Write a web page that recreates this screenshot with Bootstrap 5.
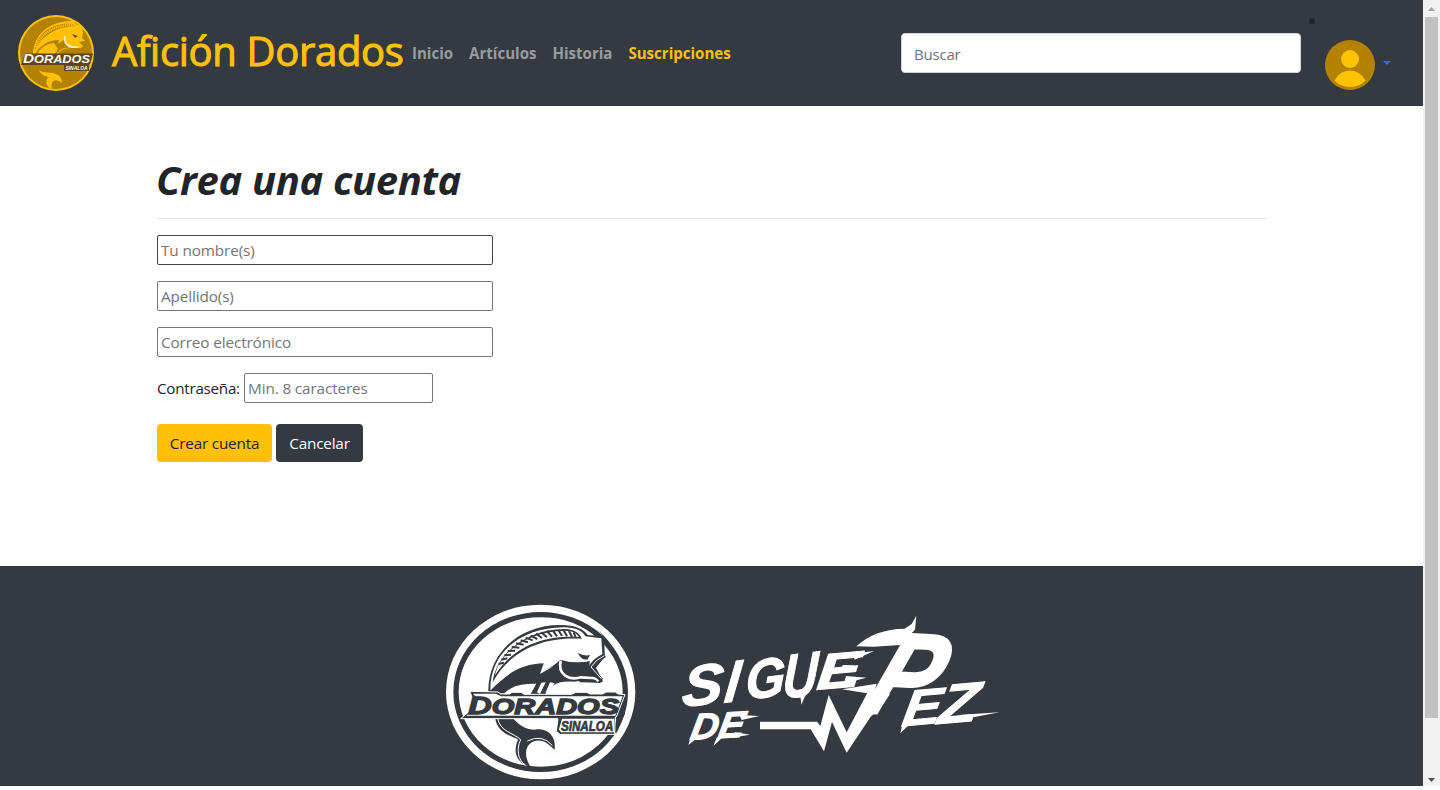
<!DOCTYPE html>
<html lang="es">
<head>
<meta charset="utf-8">
<meta name="viewport" content="width=device-width, initial-scale=1">
<title>Afición Dorados - Crea una cuenta</title>
<link href="https://cdn.jsdelivr.net/npm/bootstrap@5.3.0/dist/css/bootstrap.min.css" rel="stylesheet">
<style>
html, body { height: 786px; overflow: hidden; }
body { font-family: "Open Sans", "Noto Sans", sans-serif; font-size: 16px; color: #212529; }
svg text { font-family: "Liberation Sans", sans-serif; }
.page-body { min-width: 0; }
.site-nav { height: 106px; background: #343a40; padding: 0 32px 0 16px; }
.site-logo { width: 80px; height: 80px; margin-right: 16px; }
.site-title { font-size: 40px; font-weight: 500; line-height: 48px; color: #ffc107; width: 292px; white-space: nowrap; letter-spacing: -.32px; -webkit-text-stroke: 1px #ffc107; margin: 0 8px 4px 0; }
.site-menu { gap: 16px; font-weight: 700; font-size: 15.05px; }
.site-menu a { color: #999c9f; text-decoration: none; white-space: nowrap; }
.site-menu a.current { color: #ffc107; }
.search-box { width: 400px; height: 40px; font-size: 15px; letter-spacing: -.2px; padding: 8px 12px 6px; border: 1px solid #ced4da; border-radius: 4px; }
.search-box::placeholder { color: #6c757d; opacity: 1; }
.user-item { width: 90px; height: 106px; }
.account-area { padding: 50px 0 0 157px; height: 460px; }
.account-area h1 { font-size: 40px; font-weight: 700; font-style: italic; line-height: 48px; letter-spacing: -.36px; margin: 0 0 14px -1px; white-space: nowrap; }
.rule { width: 1110px; height: 1px; background: #e5e5e5; margin-bottom: 16px; }
.plain-field { display: block; box-sizing: border-box; width: 336px; height: 30px; padding: 1px 2px 1px 3px; border: 1px solid #767676; border-radius: 2px; font-size: 15.3px; letter-spacing: -.12px; }
.plain-field.hovered { border-color: #444; }
.plain-field.short { width: 189px; }
.plain-field::placeholder { color: #757575; opacity: 1; }
.field-stack { gap: 16px; }
.pass-label { width: 87px; font-size: 15.2px; letter-spacing: -.25px; }
.button-row { padding-top: 5px; }
.btn-account { height: 38px; border: 0; border-radius: 4px; padding: 0; font-size: 15.3px; letter-spacing: -.2px; white-space: nowrap; }
.btn-create { width: 115px; color: #212529; }
.btn-cancel { width: 87px; background: #343a40; }
.site-foot { height: 220px; background: #343a40; }
.scroll-track { width: 17px; height: 786px; background: #f1f1f1; }
.scroll-thumb { width: 13px; height: 701px; background: #c1c1c1; }
</style>
</head>
<body class="m-0 bg-white">
<div class="d-flex">
<div class="page-body flex-grow-1">
<nav class="site-nav d-flex align-items-center">
  <svg class="site-logo flex-shrink-0" viewBox="0 0 80 80" aria-label="Dorados Sinaloa">
    <circle cx="40" cy="40" r="38" fill="#ffc107"/><circle cx="40" cy="40" r="36" fill="#b58100"/>
    <path d="M17 42C17 21 35 7 57 8L61 12 66 13 67 20 66 25 69 28 63 29 67 33 65 35C53 35 46 34 41 42Z" fill="#ffc107"/>
    <path d="M19 37C21 20 37 9 57 11L59 13C42 14 28 20 19 37Z" fill="#b58100"/>
    <path d="M20 34C25 20 40 11 58 12" stroke="#ffc107" stroke-width="2.500" stroke-dasharray="1.200 .7" fill="none"/>
    <path d="M19 41C25 31 34 27 43 27L42 31 49 26C49 32 52 34 54 35C47 34 43 37 40 42H35L38 36L33 41Z" fill="#b58100"/>
    <path d="M20 43C25 33 31 31 38 30L42 36L38 42Z" fill="#ffc107"/>
    <path d="M49 23C47 32 54 35 62 34" stroke="#fff2c0" stroke-width="1.600" fill="none"/>
    <path d="M56 21l6 2-3 2z" fill="#775018"/>
    <path d="M23 57C28 61 35 58 42 62C45 64 46 67 46 70C40 65 34 67 36 76C29 74 29 66 33 64C27 63 24 60 23 57Z" fill="#ffc107"/>
    <path d="M9 40.500H77L74 51H73V58H48V52H5Z" fill="#614419"/>
    <text x="7" y="50" font-size="12" font-weight="900" font-style="italic" fill="#fff" textLength="67" lengthAdjust="spacingAndGlyphs">D<tspan font-size="10">ORADOS</tspan></text>
    <text x="49.500" y="57" font-size="5.500" font-weight="900" font-style="italic" fill="#fff" textLength="22" lengthAdjust="spacingAndGlyphs">SINALOA</text>
  </svg>
  <div class="site-title">Afición Dorados</div>
  <div class="site-menu d-flex"><a href="#">Inicio</a><a href="#">Artículos</a><a href="#">Historia</a><a href="#" class="current">Suscripciones</a></div>
  <input class="search-box ms-auto" type="text" placeholder="Buscar">
  <svg class="user-item flex-shrink-0" viewBox="0 0 90 106" role="img" aria-label="Usuario">
    <circle cx="11" cy="21" r="3" fill="#212529"/>
    <circle cx="49" cy="65" r="25" fill="#b58100"/><circle cx="49" cy="59" r="9" fill="#ffc400"/>
    <path d="M33.500 80.500Q39 70.500 49 70.500T64.500 80.500Q59 87 49 87T33.500 80.500Z" fill="#ffc400"/>
    <path d="M82 61h8l-4 4z" fill="#007bff"/>
  </svg>
</nav>
<main class="account-area">
  <h1>Crea una cuenta</h1>
  <div class="rule"></div>
  <form class="d-flex flex-column field-stack">
    <input class="plain-field hovered" placeholder="Tu nombre(s)">
    <input class="plain-field" placeholder="Apellido(s)">
    <input class="plain-field" placeholder="Correo electrónico">
    <div class="d-flex align-items-center"><label class="pass-label">Contraseña:</label><input class="plain-field short" placeholder="Min. 8 caracteres"></div>
    <div class="button-row d-flex gap-1"><button type="button" class="btn btn-warning btn-account btn-create">Crear cuenta</button><button type="button" class="btn btn-dark btn-account btn-cancel">Cancelar</button></div>
  </form>
</main>
<footer class="site-foot">
<svg width="1423" height="220" viewBox="0 566 1423 220" class="d-block">
  <g transform="translate(440 595) scale(.33333)">
    <ellipse cx="302" cy="291" rx="284" ry="262" fill="#fff"/>
    <ellipse cx="302" cy="291" rx="254" ry="232" fill="none" stroke="#343a40" stroke-width="16"/>
    <!-- body outline, head and fin -->
    <path d="M145 292C142 170 245 85 370 90C410 92 432 103 443 120L490 124Q468 96 430 76Q510 120 540 200L493 140L494 178L496 184L468 218L489 259L480 264Q450 262 420 262L360 205L150 295Z" fill="#343a40"/>
    <path d="M151 284C151 170 245 98 372 97C408 98 427 107 436 124L484 130L487 178L466 192L448 214L446 222L360 200L290 240L310 207C249 208 196 239 153 285Z" fill="#fff"/>
    <path d="M158 262C168 170 270 101 374 102C405 103 418 115 426 131C332 125 220 150 158 262Z" fill="#343a40"/>
    <path d="M165 241C182 165 273 108 374 107C399 107 411 116 417 126C335 121 230 139 165 241Z" fill="#fff"/>
    <g stroke="#343a40" stroke-width="6"><path d="M176 207l16-4M184 194l18-4M193 181l20-2M203 168l22-1M215 156l23 2M228 145l23 4M242 136l22 6M257 128l21 8M272 122l20 10M288 116l18 13M304 112l17 15M321 108l15 17M338 106l13 18M355 105l11 18M371 106l10 18M387 108l9 18M401 113l6 14"/></g>
    <!-- lower body and open jaw -->
    <path d="M154 294C195 233 247 207 311 205L300 237L335 217L361 194Q400 207 450 199L446 222Q464 239 485 258Q442 253 402 260C355 256 335 267 315 300Z" fill="#343a40"/>
    <path d="M362 197C352 238 387 258 423 247L458 249Q470 250 476 259" fill="none" stroke="#fff" stroke-width="8"/>
    <path d="M495 181Q467 193 455 211L449 221L485 256" fill="none" stroke="#343a40" stroke-width="12"/>
    <path d="M493 182Q467 194 453 216L484 251" fill="none" stroke="#fff" stroke-width="3"/>
    <path d="M414 174Q431 184 450 180L443 193C430 196 420 189 414 174Z" fill="#343a40"/>
    <path d="M190 298C219 267 254 266 289 266L272 297ZM291 292L304 263L317 262L300 297ZM316 294L330 262L344 265L323 295Z" fill="#fff"/>
    <path d="M165 365C170 418 221 423 234 434C220 465 223 501 272 516C247 477 259 447 282 439C308 429 326 448 344 464C349 421 322 398 283 404C243 404 225 373 214 365Z" fill="#343a40"/>
    <path d="M173 370C180 410 220 413 242 434C228 463 234 496 256 510" fill="none" stroke="#fff" stroke-width="3"/>
    <path d="M262 438Q306 416 337 451" fill="none" stroke="#fff" stroke-width="3"/>
    <path d="M549 304L528 365L529 417L555 355Z" fill="#343a40"/>
    <path d="M89 289L174 291L182 297H209L216 292H244L252 298H395L407 292H440L450 297H488L498 291H526L534 297L555 299L529 366H526L524 418H360L349 409L354 371H62L87 350L100 315Z" fill="#343a40" stroke="#fff" stroke-width="3"/>
    <path d="M99 296H167L184 304H548L526 362H79L94 349L112 311Z" fill="#fff"/>
    <path d="M366 371H523V412H363L357 403Z" fill="#fff"/>
    <text x="85" y="356" font-size="74" font-weight="900" font-style="italic" fill="#343a40" stroke="#343a40" stroke-width="4" textLength="452" lengthAdjust="spacingAndGlyphs">D<tspan font-size="66">ORADOS</tspan></text>
    <text x="363" y="407" font-size="43" font-weight="900" font-style="italic" fill="#343a40" stroke="#343a40" stroke-width="2" textLength="157" lengthAdjust="spacingAndGlyphs">SINALOA</text>
  </g>
  <g transform="translate(670 605) scale(.33333)" fill="#fff">
    <g font-weight="700" font-style="italic" stroke="#fff" stroke-width="3">
      <text transform="translate(33 307) rotate(-7) skewX(-12)" font-size="170" textLength="123" lengthAdjust="spacingAndGlyphs">S</text>
      <text transform="translate(160 293) rotate(-7) skewX(-14)" font-size="174" textLength="44" lengthAdjust="spacingAndGlyphs">I</text>
      <text transform="translate(226 284) rotate(-7) skewX(-9)" font-size="165" textLength="119" lengthAdjust="spacingAndGlyphs">G</text>
      <text transform="translate(336 281) rotate(-7) skewX(-10)" font-size="185" textLength="105" lengthAdjust="spacingAndGlyphs">U</text>
      <text transform="translate(437 254) rotate(-5) skewX(-10)" font-size="150" textLength="132" lengthAdjust="spacingAndGlyphs">E</text>
      <text transform="translate(58 404) rotate(-3) skewX(-13)" font-size="110" textLength="160" lengthAdjust="spacingAndGlyphs">DE</text>
      <text transform="translate(574 322) rotate(3) skewX(-19)" font-size="350" stroke-width="9" textLength="194" lengthAdjust="spacingAndGlyphs">P</text>
      <text transform="translate(692 364) rotate(-5) skewX(-14)" font-size="150" textLength="116" lengthAdjust="spacingAndGlyphs">E</text>
      <text transform="translate(800 357) rotate(-5) skewX(-14)" font-size="165" textLength="120" lengthAdjust="spacingAndGlyphs">Z</text>
    </g>
    <!-- heartbeat line -->
    <path d="M270 350H441L451 363L476 270L530 382L593 262L660 268L634 305L602 335L530 443L486 351L462 439L422 373H270Z"/>
    <!-- brush spikes -->
    <path d="M559 124Q615 72 704 71L725 57L739 32L735 74L690 120L610 125ZM516 253L620 236L610 268ZM875 329L988 322L918 335L870 342Z"/>
    <path d="M548 146L612 138L554 164ZM528 213L590 218L522 235ZM518 180L556 181L514 195ZM390 262L394 299L412 258ZM63 395L55 420L78 402ZM140 398L130 423L155 400ZM208 330L268 333L215 345ZM195 382L240 389L192 397ZM698 353L691 385L714 362Z"/>
  </g>
</svg>
</footer>
</div>
<aside class="scroll-track d-flex flex-column align-items-center flex-shrink-0" aria-hidden="true">
  <svg width="17" height="17"><path d="M5 11h7L8.500 7z" fill="#a3a3a3"/></svg><div class="scroll-thumb"></div><svg class="mt-auto" width="17" height="17"><path d="M5 9h7L8.500 13z" fill="#505050"/></svg>
</aside>
</div>
<script src="https://cdn.jsdelivr.net/npm/bootstrap@5.3.0/dist/js/bootstrap.bundle.min.js"></script>
</body>
</html>
